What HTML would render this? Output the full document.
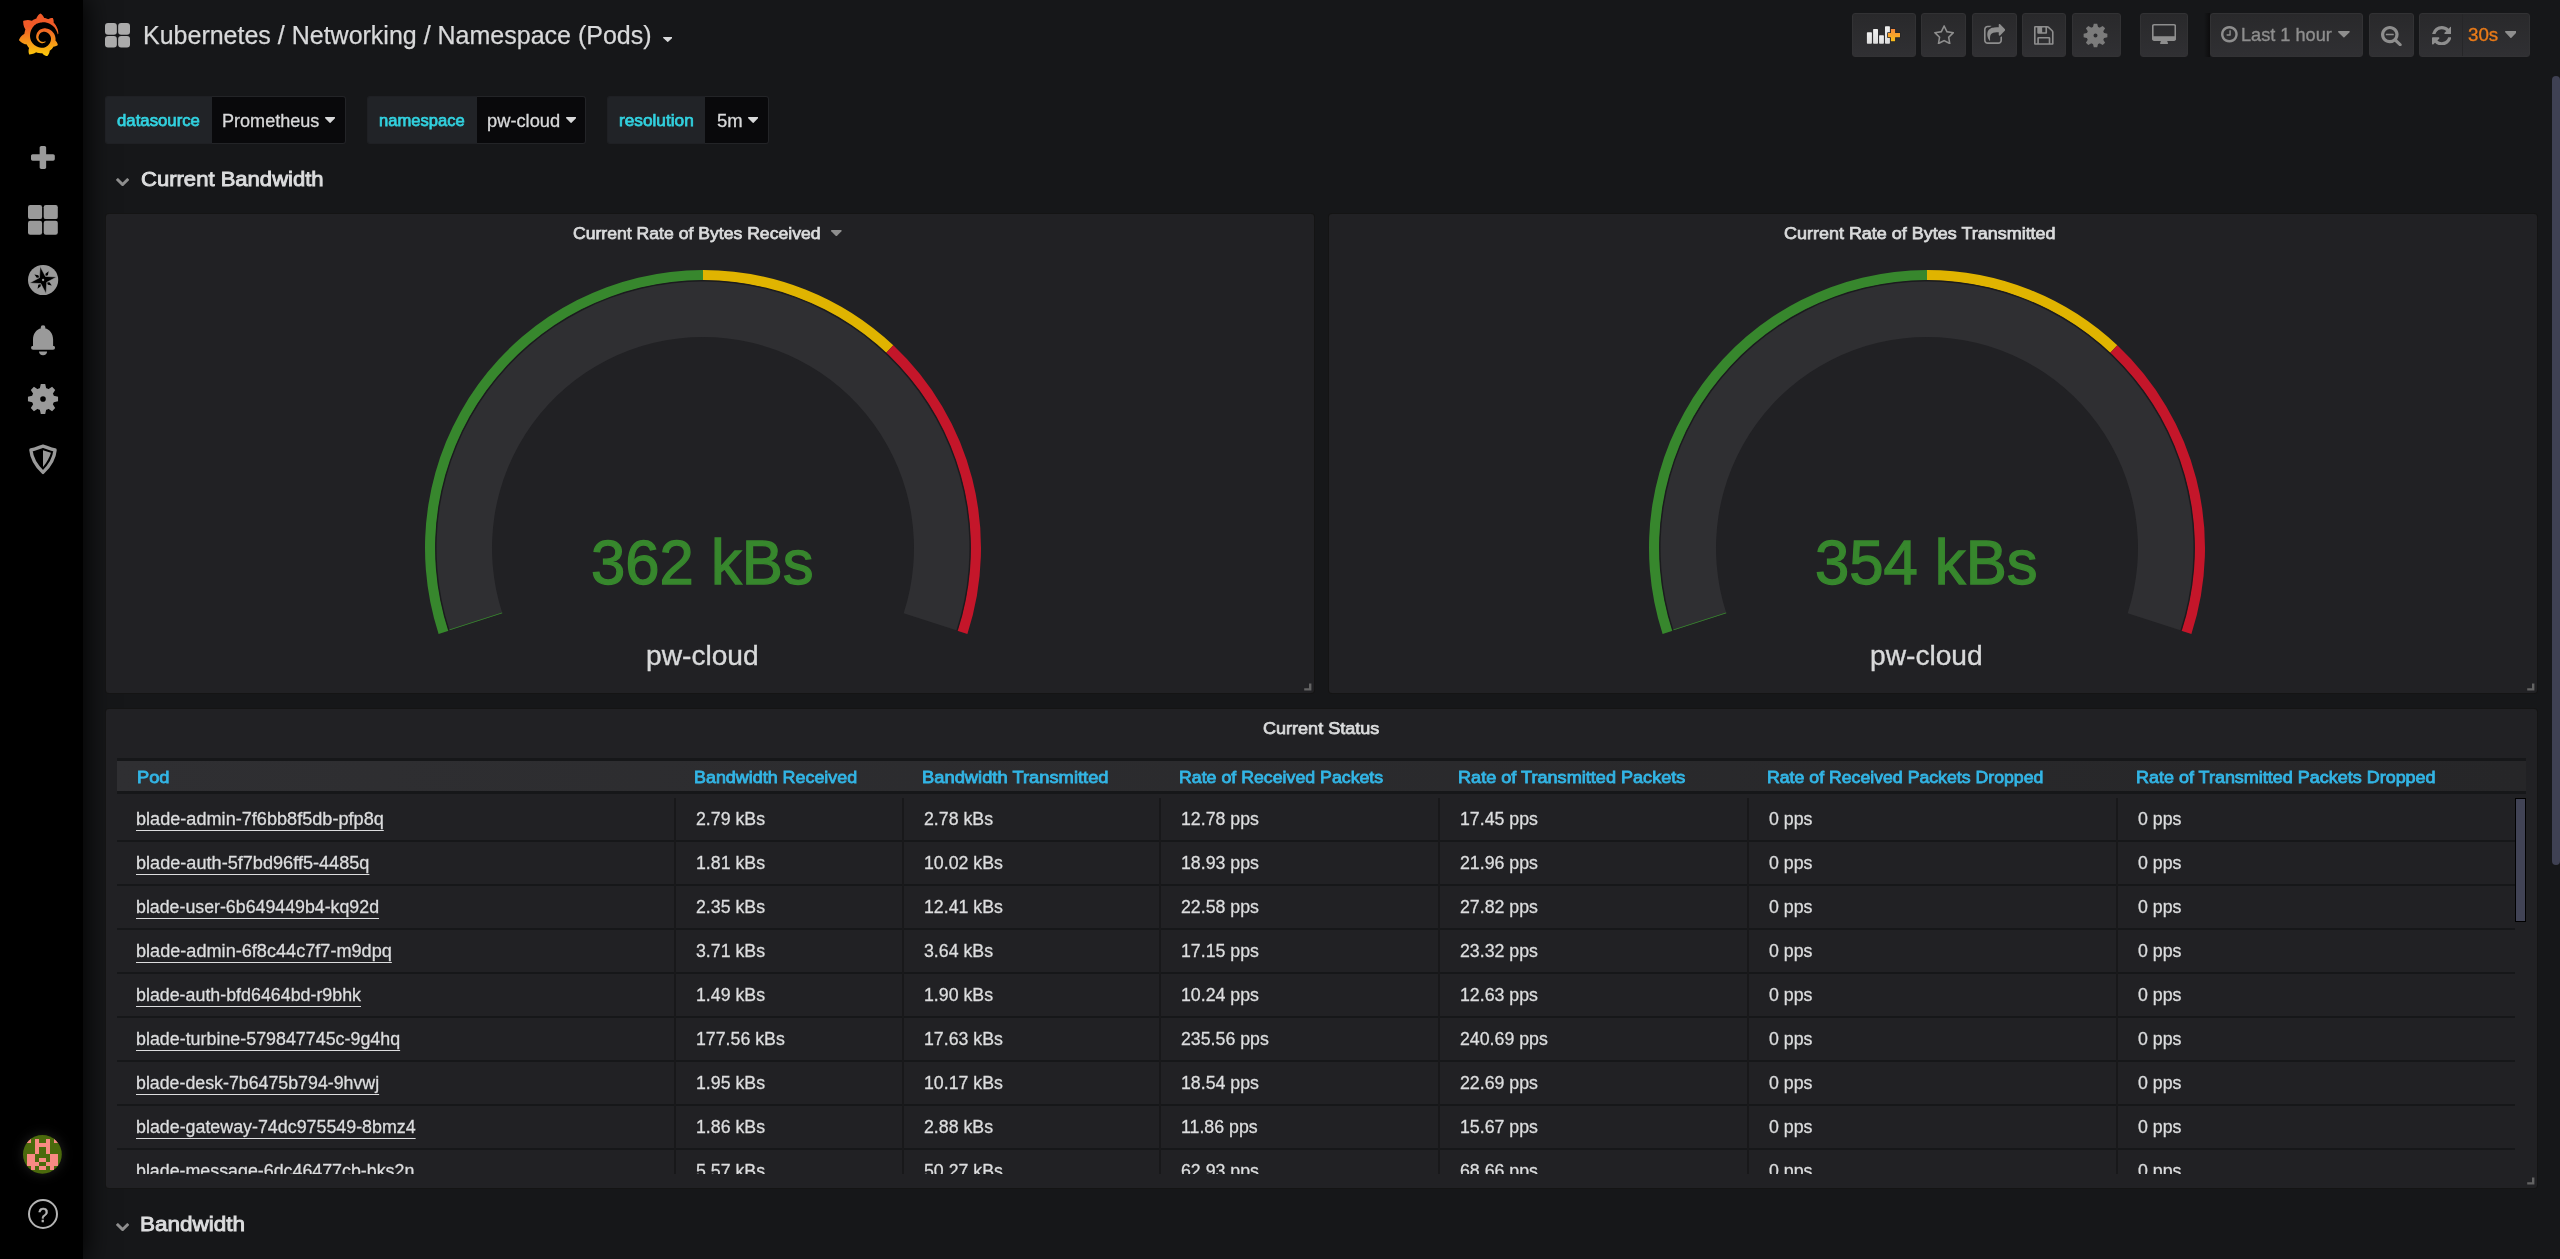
<!DOCTYPE html>
<html lang="en"><head><meta charset="utf-8"><title>Kubernetes / Networking / Namespace (Pods) - Grafana</title>
<style>
html,body{margin:0;padding:0}body{width:2560px;height:1259px;overflow:hidden;background:#161719;position:relative;font-family:"Liberation Sans", Arial, sans-serif}
.a{position:absolute;display:block}.t{position:absolute;white-space:nowrap;line-height:1.2;transform-origin:0 0}
</style></head>
<body>
<nav id="sidemenu" aria-label="Side menu">
<div class="a" id="side" style="left:0;top:0;width:83px;height:1259px;background:#000;box-shadow:0 0 26px 2px #000"></div>
<svg class="a" style="left:18px;top:12.9px" width="41.3" height="43.6" viewBox="0 0 351 365"><defs><linearGradient id="lg" gradientUnits="userSpaceOnUse" x1="175.5" y1="445.5" x2="175.5" y2="114"><stop offset="0" stop-color="#FFF100"/><stop offset="1" stop-color="#F05A28"/></linearGradient></defs><path fill="url(#lg)" d="M342,161.2c-0.6-6.1-1.6-13.1-3.6-20.9c-2-7.7-5-16.2-9.4-25c-4.4-8.8-10.1-17.9-17.500-26.800c-2.900-3.500-6.100-6.900-9.500-10.200c5.100-20.300-6.200-37.900-6.200-37.900c-19.500-1.200-31.900,6.100-36.500,9.400c-0.800-0.300-1.500-0.700-2.300-1c-3.300-1.300-6.700-2.600-10.300-3.700c-3.500-1.100-7.100-2.100-10.800-3c-3.700-0.900-7.400-1.600-11.200-2.200c-0.700-0.100-1.300-0.200-2-0.300c-8.500-27.200-32.900-38.600-32.900-38.600c-27.300,17.300-32.400,41.500-32.400,41.500s-0.100,0.500-0.300,1.400c-1.500,0.400-3,0.900-4.500,1.300c-2.100,0.600-4.200,1.400-6.200,2.200c-2.100,0.800-4.100,1.600-6.200,2.500c-4.100,1.800-8.200,3.800-12.200,6c-3.900,2.200-7.700,4.600-11.400,7.100c-0.500-0.200-1-0.400-1-0.400c-37.800-14.400-71.300,2.900-71.300,2.900c-3.100,40.200,15.100,65.500,18.700,70.100c-0.900,2.500-1.700,5-2.500,7.500c-2.800,9.100-4.900,18.400-6.200,28.100c-0.200,1.400-0.400,2.800-0.500,4.200C18.800,192.700,8.500,228,8.500,228c29.100,33.500,63.100,35.600,63.100,35.600c0,0,0.100-0.100,0.100-0.100c4.300,7.700,9.300,15,14.900,21.900c2.400,2.900,4.800,5.600,7.400,8.300c-10.600,30.400,1.500,55.600,1.500,55.600c32.400,1.200,53.700-14.200,58.200-17.700c3.200,1.100,6.500,2.100,9.800,2.900c10,2.600,20.200,4.100,30.400,4.500c2.500,0.100,5.100,0.200,7.600,0.100l1.200,0l0.800,0l1.600,0l1.600-0.100l0,0.100c15.300,21.800,42.100,24.900,42.100,24.900c19.100-20.100,20.200-40.100,20.200-44.400l0,0c0,0,0-0.100,0-0.300c0-0.400,0-0.600,0-0.600l0,0c0-0.300,0-0.600,0-0.900c4-2.800,7.800-5.800,11.400-9.100c7.600-6.900,14.300-14.800,19.900-23.300c0.500-0.800,1-1.600,1.500-2.400c21.600,1.200,36.900-13.400,36.900-13.400c-3.600-22.500-16.400-33.500-19.100-35.600l0,0c0,0-0.100-0.100-0.300-0.200c-0.200-0.100-0.200-0.200-0.200-0.200c0,0,0,0,0,0c-0.100-0.100-0.300-0.200-0.500-0.300c0.100-1.400,0.200-2.700,0.300-4.100c0.200-2.400,0.200-4.900,0.200-7.300l0-1.800l0-0.900l0-0.500c0-0.600,0-0.400,0-0.600l-0.100-1.500l-0.100-2c0-0.700-0.100-1.300-0.200-1.900c-0.100-0.600-0.100-1.300-0.200-1.900l-0.200-1.900l-0.300-1.900c-0.400-2.500-0.800-4.900-1.400-7.400c-2.300-9.700-6.100-18.900-11-27.200c-5-8.300-11.200-15.600-18.300-21.800c-7-6.200-14.900-11.200-23.100-14.900c-8.300-3.700-16.900-6.100-25.500-7.200c-4.300-0.600-8.600-0.800-12.900-0.700l-1.600,0l-0.400,0c-0.100,0-0.600,0-0.500,0l-0.700,0l-1.600,0.100c-0.600,0-1.200,0.100-1.700,0.100c-2.200,0.200-4.400,0.500-6.500,0.900c-8.600,1.600-16.700,4.700-23.800,9c-7.100,4.300-13.300,9.600-18.300,15.600c-5,6-8.900,12.700-11.600,19.600c-2.700,6.900-4.200,14.100-4.600,21c-0.100,1.700-0.100,3.500-0.100,5.200c0,0.400,0,0.900,0,1.300l0.100,1.400c0.100,0.800,0.100,1.700,0.200,2.500c0.300,3.500,1,6.900,1.900,10.100c1.900,6.500,4.900,12.400,8.600,17.400c3.700,5,8.200,9.100,12.900,12.400c4.700,3.200,9.800,5.500,14.800,7c5,1.500,10,2.100,14.700,2.100c0.600,0,1.200,0,1.700,0c0.300,0,0.600,0,0.900,0c0.300,0,0.600,0,0.900-0.100c0.500,0,1-0.100,1.500-0.100c0.100,0,0.300,0,0.400-0.100l0.500-0.100c0.300,0,0.600-0.100,0.900-0.100c0.600-0.100,1.100-0.200,1.700-0.300c0.600-0.100,1.100-0.200,1.600-0.400c1.100-0.200,2.100-0.600,3.100-0.900c2-0.700,4-1.500,5.700-2.400c1.800-0.900,3.400-2,5-3c0.400-0.300,0.900-0.600,1.300-1c1.600-1.300,1.900-3.700,0.600-5.300c-1.100-1.400-3.100-1.800-4.700-0.900c-0.400,0.200-0.800,0.400-1.200,0.600c-1.400,0.700-2.800,1.300-4.300,1.800c-1.500,0.500-3.100,0.900-4.700,1.200c-0.800,0.100-1.600,0.200-2.500,0.300c-0.400,0-0.800,0.100-1.300,0.100c-0.400,0-0.900,0-1.200,0c-0.400,0-0.800,0-1.200,0c-0.500,0-1,0-1.500-0.100c0,0-0.300,0-0.100,0l-0.200,0l-0.300,0c-0.200,0-0.500,0-0.700-0.100c-0.500-0.100-0.900-0.100-1.400-0.200c-3.700-0.500-7.400-1.600-10.900-3.200c-3.600-1.600-7-3.800-10.100-6.600c-3.100-2.800-5.800-6.100-7.900-9.900c-2.100-3.800-3.600-8-4.300-12.400c-0.300-2.200-0.500-4.500-0.400-6.700c0-0.600,0.100-1.200,0.100-1.800c0,0.200,0-0.100,0-0.100l0-0.200l0-0.500c0-0.300,0.100-0.600,0.100-0.900c0.100-1.200,0.300-2.400,0.500-3.600c1.700-9.600,6.500-19,13.900-26.100c1.900-1.800,3.900-3.400,6-4.900c2.100-1.500,4.400-2.800,6.800-3.900c2.400-1.100,4.800-2,7.400-2.700c2.500-0.700,5.100-1.100,7.800-1.400c1.300-0.100,2.600-0.200,4-0.200c0.400,0,0.600,0,0.900,0l1.100,0l0.700,0c0.300,0,0,0,0.100,0l0.300,0l1.100,0.100c2.900,0.200,5.700,0.600,8.500,1.300c5.600,1.200,11.100,3.300,16.200,6.100c10.200,5.700,18.900,14.500,24.200,25.100c2.700,5.300,4.600,11,5.500,16.900c0.200,1.500,0.400,3,0.500,4.500l0.100,1.100l0.100,1.100c0,0.400,0,0.800,0,1.100c0,0.400,0,0.800,0,1.100l0,1l0,1.100c0,0.700-0.100,1.900-0.100,2.600c-0.100,1.600-0.300,3.300-0.500,4.900c-0.200,1.600-0.500,3.200-0.800,4.800c-0.300,1.600-0.700,3.200-1.100,4.700c-0.800,3.100-1.800,6.200-3,9.300c-2.400,6-5.600,11.800-9.400,17.100c-7.700,10.600-18.200,19.200-30.200,24.700c-6,2.700-12.300,4.700-18.800,5.700c-3.200,0.600-6.500,0.900-9.800,1l-0.600,0l-0.500,0l-1.100,0l-1.600,0l-0.800,0c0.400,0-0.100,0-0.100,0l-0.300,0c-1.800,0-3.500-0.100-5.300-0.300c-7-0.500-13.900-1.800-20.700-3.700c-6.700-1.900-13.200-4.600-19.400-7.800c-12.300-6.600-23.400-15.600-32-26.500c-4.300-5.400-8.100-11.300-11.200-17.400c-3.100-6.100-5.600-12.600-7.400-19.100c-1.800-6.600-2.900-13.300-3.400-20.100l-0.100-1.300l0-0.300l0-0.300l0-0.600l0-1.100l0-0.300l0-0.400l0-0.800l0-1.600l0-0.300c0,0,0,0.100,0-0.100l0-0.600c0-0.800,0-1.700,0-2.500c0.100-3.300,0.400-6.800,0.800-10.200c0.400-3.400,1-6.900,1.700-10.300c0.700-3.400,1.500-6.800,2.500-10.200c1.900-6.700,4.300-13.200,7.100-19.300c5.700-12.200,13.100-23.100,22-31.800c2.200-2.200,4.500-4.200,6.900-6.200c2.400-1.900,4.900-3.700,7.500-5.400c2.500-1.700,5.200-3.200,7.900-4.600c1.300-0.700,2.700-1.400,4.100-2c0.700-0.300,1.400-0.600,2.100-0.900c0.700-0.300,1.400-0.600,2.100-0.900c2.800-1.200,5.700-2.200,8.700-3.100c0.700-0.200,1.500-0.400,2.200-0.700c0.700-0.200,1.500-0.400,2.200-0.600c1.500-0.400,3-0.800,4.500-1.100c0.700-0.200,1.500-0.300,2.300-0.500c0.800-0.200,1.500-0.300,2.300-0.500c0.800-0.100,1.500-0.300,2.300-0.400l1.100-0.200l1.200-0.200c0.800-0.100,1.500-0.200,2.300-0.300c0.900-0.100,1.700-0.200,2.600-0.300c0.700-0.100,1.900-0.200,2.600-0.300c0.500-0.100,1.100-0.100,1.600-0.200l1.100-0.100l0.500-0.100l0.600,0c0.900-0.100,1.700-0.100,2.600-0.200l1.300-0.100c0,0,0.500,0,0.100,0l0.300,0l0.600,0c0.700,0,1.500-0.100,2.200-0.100c2.900-0.100,5.900-0.100,8.800,0c5.800,0.200,11.500,0.900,17,1.900c11.100,2.100,21.500,5.600,31,10.300c9.500,4.600,17.900,10.300,25.300,16.500c0.500,0.400,0.900,0.800,1.400,1.200c0.400,0.400,0.900,0.800,1.300,1.200c0.900,0.800,1.700,1.600,2.600,2.400c0.900,0.800,1.700,1.600,2.500,2.400c0.800,0.800,1.600,1.600,2.400,2.500c3.100,3.300,6,6.600,8.600,10c5.200,6.700,9.400,13.500,12.700,19.900c0.200,0.400,0.400,0.800,0.600,1.200c0.200,0.400,0.400,0.800,0.600,1.200c0.400,0.800,0.800,1.600,1.100,2.400c0.400,0.800,0.700,1.500,1.100,2.300c0.300,0.800,0.700,1.500,1,2.300c1.200,3,2.400,5.900,3.300,8.600c1.500,4.400,2.600,8.300,3.500,11.700c0.300,1.400,1.600,2.300,3,2.100c1.500-0.100,2.600-1.300,2.600-2.800C342.600,170.400,342.500,166.100,342,161.200z"/></svg>
<svg class="a" style="left:31.00px;top:145.90px" width="23.80" height="23.00" viewBox="192 128 1408 1408" preserveAspectRatio="none"><path fill="#9a9a9a" d="M1600 736v192q0 40-28 68t-68 28h-416v416q0 40-28 68t-68 28h-192q-40 0-68-28t-28-68v-416h-416q-40 0-68-28t-28-68v-192q0-40 28-68t68-28h416v-416q0-40 28-68t68-28h192q40 0 68 28t28 68v416h416q40 0 68 28t28 68z"/></svg>
<svg class="a" style="left:28.1px;top:205px" width="29.799999999999997" height="29.80000000000001"><rect x="0.00" y="0.00" width="14.10" height="14.10" rx="2.2" fill="#9a9a9a"/><rect x="0.00" y="15.70" width="14.10" height="14.10" rx="2.2" fill="#9a9a9a"/><rect x="15.70" y="0.00" width="14.10" height="14.10" rx="2.2" fill="#9a9a9a"/><rect x="15.70" y="15.70" width="14.10" height="14.10" rx="2.2" fill="#9a9a9a"/></svg>
<svg class="a" style="left:27px;top:264px" width="32" height="32" viewBox="0 0 32 32"><circle cx="16.1" cy="16" r="15.1" fill="#9a9a9a"/><polygon points="18.58,12.12 20.88,11.22 21.65,7.32 18.43,9.66" fill="#000"/><polygon points="19.98,18.48 20.88,20.78 24.78,21.55 22.44,18.33" fill="#000"/><polygon points="13.62,19.88 11.32,20.78 10.55,24.68 13.77,22.34" fill="#000"/><polygon points="12.22,13.52 11.32,11.22 7.42,10.45 9.76,13.67" fill="#000"/><polygon points="13.16,2.62 18.42,12.38 29.48,13.06 19.72,18.32 19.04,29.38 13.78,19.62 2.72,18.94 12.48,13.68" fill="#000" stroke="#9a9a9a" stroke-width="0.5"/><circle cx="16.1" cy="16" r="1.15" fill="#9a9a9a"/></svg>
<svg class="a" style="left:30px;top:323.6px" width="27" height="33" viewBox="0 0 27 33"><path fill="#9a9a9a" d="M3,22 V15.5 C3,9.800 6.200,5.300 11.200,4.200 L13.050,3.600 L14.900,4.200 C19.900,5.300 23.100,9.800 23.100,15.500 V22Z M3.100,21.700 h19.900 a2,2 0 0 1 0,4.100 h-19.900 a2,2 0 0 1 0,-4.100z M9,27.500 h8.100 c0,2.100 -1.700,3.800 -4.050,3.800 s-4.050,-1.700 -4.050,-3.800z"/><circle cx="13.050" cy="3.700" r="2.350" fill="#9a9a9a"/></svg>
<svg class="a" style="left:27px;top:382.9px" width="32" height="32" viewBox="0 0 32 32"><path fill="#9a9a9a" d="M12.62,6.15 L13.80,0.96 L18.20,0.96 L19.38,6.15Z M20.58,6.65 L25.08,3.81 L28.19,6.92 L25.35,11.42Z M25.85,12.62 L31.04,13.80 L31.04,18.20 L25.85,19.38Z M25.35,20.58 L28.19,25.08 L25.08,28.19 L20.58,25.35Z M19.38,25.85 L18.20,31.04 L13.80,31.04 L12.62,25.85Z M11.42,25.35 L6.92,28.19 L3.81,25.08 L6.65,20.58Z M6.15,19.38 L0.96,18.20 L0.96,13.80 L6.15,12.62Z M6.65,11.42 L3.81,6.92 L6.92,3.81 L11.42,6.65Z "/><path fill="#9a9a9a" fill-rule="evenodd" d="M4.80,16.0 a11.2,11.2 0 1,0 22.4,0 a11.2,11.2 0 1,0 -22.4,0Z M13.20,16.0 a2.8,2.8 0 1,0 5.6,0 a2.8,2.8 0 1,0 -5.6,0Z"/></svg>
<svg class="a" style="left:28px;top:442.7px" width="30" height="33" viewBox="0 0 30 33"><path fill="none" stroke="#9a9a9a" stroke-width="3.3" stroke-linejoin="round" d="M2.900,7 C7.500,6.300 12.300,3.800 15,3.100 C17.700,3.800 22.500,6.300 27.100,7 C26.500,14 23.200,21.500 15,29.400 C6.800,21.500 3.500,14 2.900,7Z"/><path fill="#9a9a9a" d="M15,7.200 L22.900,9.700 C21.800,14 19.200,18.800 15,24.100Z"/></svg>
<svg class="a" style="left:22.9px;top:1134.8px;filter:drop-shadow(0 0 6px rgba(60,60,60,.55))" width="38.8" height="38.8" viewBox="0 0 10 10"><defs><clipPath id="cp"><circle cx="5" cy="5" r="5"/></clipPath></defs><g clip-path="url(#cp)" shape-rendering="crispEdges"><rect width="10" height="10" fill="#4b6a0c"/><rect x="1" y="1" width="1.02" height="1.02" fill="#f98a83"/><rect x="3" y="1" width="1.02" height="1.02" fill="#f98a83"/><rect x="6" y="1" width="1.02" height="1.02" fill="#f98a83"/><rect x="8" y="1" width="1.02" height="1.02" fill="#f98a83"/><rect x="3" y="2" width="1.02" height="1.02" fill="#f98a83"/><rect x="4" y="2" width="1.02" height="1.02" fill="#f98a83"/><rect x="5" y="2" width="1.02" height="1.02" fill="#f98a83"/><rect x="6" y="2" width="1.02" height="1.02" fill="#f98a83"/><rect x="3" y="3" width="1.02" height="1.02" fill="#f98a83"/><rect x="6" y="3" width="1.02" height="1.02" fill="#f98a83"/><rect x="3" y="4" width="1.02" height="1.02" fill="#f98a83"/><rect x="6" y="4" width="1.02" height="1.02" fill="#f98a83"/><rect x="1" y="5" width="1.02" height="1.02" fill="#f98a83"/><rect x="2" y="5" width="1.02" height="1.02" fill="#f98a83"/><rect x="7" y="5" width="1.02" height="1.02" fill="#f98a83"/><rect x="8" y="5" width="1.02" height="1.02" fill="#f98a83"/><rect x="1" y="6" width="1.02" height="1.02" fill="#f98a83"/><rect x="2" y="6" width="1.02" height="1.02" fill="#f98a83"/><rect x="4" y="6" width="1.02" height="1.02" fill="#f98a83"/><rect x="5" y="6" width="1.02" height="1.02" fill="#f98a83"/><rect x="7" y="6" width="1.02" height="1.02" fill="#f98a83"/><rect x="8" y="6" width="1.02" height="1.02" fill="#f98a83"/><rect x="1" y="7" width="1.02" height="1.02" fill="#f98a83"/><rect x="2" y="7" width="1.02" height="1.02" fill="#f98a83"/><rect x="3" y="7" width="1.02" height="1.02" fill="#f98a83"/><rect x="6" y="7" width="1.02" height="1.02" fill="#f98a83"/><rect x="7" y="7" width="1.02" height="1.02" fill="#f98a83"/><rect x="8" y="7" width="1.02" height="1.02" fill="#f98a83"/><rect x="2" y="8" width="1.02" height="1.02" fill="#f98a83"/><rect x="4" y="8" width="1.02" height="1.02" fill="#f98a83"/><rect x="5" y="8" width="1.02" height="1.02" fill="#f98a83"/><rect x="7" y="8" width="1.02" height="1.02" fill="#f98a83"/></g></svg>
<svg class="a" style="left:27px;top:1198px" width="32" height="32" viewBox="0 0 32 32"><circle cx="16" cy="16" r="14" fill="none" stroke="#b4b4b4" stroke-width="2"/></svg>
<span class="t" id="t0" style="font-size:21px;-webkit-text-stroke:0.5px currentColor;left:38.48px;top:1202.30px;color:#b4b4b4;transform:scaleX(0.8742);">?</span>
</nav>
<header id="navbar">
<svg class="a" style="left:105px;top:23px" width="25" height="24.6"><rect x="0.00" y="0.00" width="11.85" height="11.65" rx="3" fill="#ababab"/><rect x="0.00" y="12.95" width="11.85" height="11.65" rx="3" fill="#ababab"/><rect x="13.15" y="0.00" width="11.85" height="11.65" rx="3" fill="#ababab"/><rect x="13.15" y="12.95" width="11.85" height="11.65" rx="3" fill="#ababab"/></svg>
<span class="t" id="t1" style="font-size:25.5px;-webkit-text-stroke:0.25px currentColor;left:142.94px;top:19.90px;color:#d8d9da;transform:scaleX(0.9803);">Kubernetes / Networking / Namespace (Pods)</span>
<svg class="a" style="left:662.75px;top:37.10px" width="9.50" height="5.00" viewBox="384 640 1024 576" preserveAspectRatio="none"><path fill="#d8d9da" d="M1408 704q0 26-19 45l-448 448q-19 19-45 19t-45-19l-448-448q-19-19-19-45t19-45 45-19h896q26 0 45 19t19 45z"/></svg>
<div class="a" style="left:1852px;top:13px;width:64px;height:44px;background:linear-gradient(180deg,#29292b,#303033);border:1px solid #323234;border-radius:3px;box-sizing:border-box"></div>
<div class="a" style="left:1921px;top:13px;width:45px;height:44px;background:linear-gradient(180deg,#29292b,#303033);border:1px solid #323234;border-radius:3px;box-sizing:border-box"></div>
<div class="a" style="left:1972px;top:13px;width:45px;height:44px;background:linear-gradient(180deg,#29292b,#303033);border:1px solid #323234;border-radius:3px;box-sizing:border-box"></div>
<div class="a" style="left:2022px;top:13px;width:44px;height:44px;background:linear-gradient(180deg,#29292b,#303033);border:1px solid #323234;border-radius:3px;box-sizing:border-box"></div>
<div class="a" style="left:2072px;top:13px;width:49px;height:44px;background:linear-gradient(180deg,#29292b,#303033);border:1px solid #323234;border-radius:3px;box-sizing:border-box"></div>
<div class="a" style="left:2140px;top:13px;width:48px;height:44px;background:linear-gradient(180deg,#29292b,#303033);border:1px solid #323234;border-radius:3px;box-sizing:border-box"></div>
<div class="a" style="left:2210px;top:13px;width:153px;height:44px;background:linear-gradient(180deg,#29292b,#303033);border:1px solid #323234;border-radius:3px;box-sizing:border-box"></div>
<div class="a" style="left:2369px;top:13px;width:45px;height:44px;background:linear-gradient(180deg,#29292b,#303033);border:1px solid #323234;border-radius:3px;box-sizing:border-box"></div>
<div class="a" style="left:2419px;top:13px;width:111px;height:44px;background:linear-gradient(180deg,#29292b,#303033);border:1px solid #323234;border-radius:3px;box-sizing:border-box"></div>
<div class="a" style="left:2204px;top:13px;width:6px;height:44px;background:linear-gradient(90deg,#161719,#0c0c0d)"></div>
<div class="a" style="left:2462px;top:14px;width:1px;height:42px;background:#262628"></div>
<svg class="a" style="left:1866px;top:24px" width="36" height="22" viewBox="0 0 36 22"><defs><linearGradient id="og" x1="0" y1="0" x2="0" y2="1"><stop offset="0" stop-color="#f6893c"/><stop offset="1" stop-color="#fcc01a"/></linearGradient><linearGradient id="wg" x1="0" y1="0" x2="0" y2="1"><stop offset="0" stop-color="#f0f0f0"/><stop offset="1" stop-color="#dcdcdc"/></linearGradient></defs>
<rect x="0.9" y="8.2" width="5" height="11.6" rx=".7" fill="url(#wg)"/><rect x="7.1" y="5" width="4.9" height="14.800" rx=".7" fill="url(#wg)"/><rect x="13.1" y="11.2" width="4.8" height="8.600" rx=".7" fill="url(#wg)"/><rect x="19" y="2.200" width="4.900" height="17.600" rx=".7" fill="url(#wg)"/>
<path d="M24.900,5 h4.200 v4.100 h4.900 v4.200 h-4.900 v4.000 h-4.200 v-4.000 h-3.000 v-4.200 h3.000z" fill="url(#og)" stroke="#242426" stroke-width="1.5" paint-order="stroke" stroke-linejoin="round"/></svg>
<svg class="a" style="left:1933.75px;top:24.50px" width="20.25" height="19.50" viewBox="64 32 1664 1587" preserveAspectRatio="none"><path fill="#8e8e8e" d="M1201 1004l306-297-422-62-189-382-189 382-422 62 306 297-73 421 378-199 377 199zm527-357q0 22-26 48l-363 354 86 500q1 7 1 20 0 50-41 50-19 0-40-12l-449-236-449 236q-22 12-40 12-21 0-31.500-14.500t-10.500-35.500q0-6 2-20l86-500-364-354q-25-27-25-48 0-37 56-46l502-73 225-455q19-41 49-41t49 41l225 455 502 73q56 9 56 46z"/></svg>
<svg class="a" style="left:1984.00px;top:23.75px" width="21.30" height="20.00" viewBox="64 0 1664 1536" preserveAspectRatio="none"><path fill="#8e8e8e" d="M1472 989v259q0 119-84.500 203.500t-203.500 84.500h-832q-119 0-203.500-84.500t-84.500-203.500v-832q0-119 84.500-203.500t203.500-84.500h255q13 0 22.500 9.500t9.500 22.500q0 27-26 32-77 26-133 60-10 4-16 4h-112q-66 0-113 47t-47 113v832q0 66 47 113t113 47h832q66 0 113-47t47-113v-214q0-19 18-29 28-13 54-37 16-16 35-8 21 9 21 29zm237-496l-384 384q-18 19-45 19-12 0-25-5-39-17-39-59v-192h-160q-323 0-438 131-119 137-74 473 3 23-20 34-8 2-12 2-16 0-26-13-10-14-21-31t-39.500-68.500-49.500-99.500-38.500-114-17.500-122q0-49 3.500-91t14-90 28-88 47-81.500 68.500-74 94.500-61.500 124.500-48.500 159.500-30.500 196.500-11h160v-192q0-42 39-59 13-5 25-5 26 0 45 19l384 384q19 19 19 45t-19 45z"/></svg>
<svg class="a" style="left:2034.40px;top:26.00px" width="19.60" height="18.75" viewBox="128 128 1536 1536" preserveAspectRatio="none"><path fill="#8e8e8e" d="M512 1536h768v-384h-768v384zm896 0h128v-896q0-14-10-38.500t-20-34.500l-281-281q-10-10-34-20t-39-10v416q0 40-28 68t-68 28h-576q-40 0-68-28t-28-68v-416h-128v1280h128v-416q0-40 28-68t68-28h832q40 0 68 28t28 68v416zm-384-928v-320q0-13-9.500-22.500t-22.500-9.500h-192q-13 0-22.500 9.500t-9.500 22.500v320q0 13 9.500 22.500t22.500 9.500h192q13 0 22.500-9.500t9.500-22.500zm640 32v928q0 40-28 68t-68 28h-1344q-40 0-68-28t-28-68v-1344q0-40 28-68t68-28h928q40 0 88 20t76 48l280 280q28 28 48 76t20 88z"/></svg>
<svg class="a" style="left:2083.0px;top:22.5px" width="25" height="25" viewBox="0 0 25 25"><path fill="#7b7b7b" d="M9.82,4.67 L10.77,0.63 L14.23,0.63 L15.18,4.67Z M16.14,5.07 L19.67,2.88 L22.12,5.33 L19.93,8.86Z M20.33,9.82 L24.37,10.77 L24.37,14.23 L20.33,15.18Z M19.93,16.14 L22.12,19.67 L19.67,22.12 L16.14,19.93Z M15.18,20.33 L14.23,24.37 L10.77,24.37 L9.82,20.33Z M8.86,19.93 L5.33,22.12 L2.88,19.67 L5.07,16.14Z M4.67,15.18 L0.63,14.23 L0.63,10.77 L4.67,9.82Z M5.07,8.86 L2.88,5.33 L5.33,2.88 L8.86,5.07Z "/><path fill="#7b7b7b" fill-rule="evenodd" d="M3.60,12.5 a8.9,8.9 0 1,0 17.8,0 a8.9,8.9 0 1,0 -17.8,0Z M10.50,12.5 a2.0,2.0 0 1,0 4.0,0 a2.0,2.0 0 1,0 -4.0,0Z"/></svg>
<svg class="a" style="left:2151.90px;top:24.40px" width="24.10" height="20.00" viewBox="-64 0 1920 1664" preserveAspectRatio="none"><path fill="#8e8e8e" d="M1728 992v-832q0-13-9.500-22.500t-22.500-9.500h-1600q-13 0-22.500 9.500t-9.500 22.500v832q0 13 9.500 22.500t22.500 9.500h1600q13 0 22.500-9.500t9.500-22.500zm128-832v1088q0 66-47 113t-113 47h-544q0 37 16 77.500t32 71 16 43.500q0 26-19 45t-45 19h-512q-26 0-45-19t-19-45q0-14 16-44t32-70 16-78h-544q-66 0-113-47t-47-113v-1088q0-66 47-113t113-47h1600q66 0 113 47t47 113z"/></svg>
<svg class="a" style="left:2221.00px;top:26.00px" width="16.75" height="16.50" viewBox="128 128 1536 1536" preserveAspectRatio="none"><path fill="#8e8e8e" d="M1024 544v448q0 14-9 23t-23 9h-320q-14 0-23-9t-9-23v-64q0-14 9-23t23-9h224v-352q0-14 9-23t23-9h64q14 0 23 9t9 23zm416 352q0-148-73-273t-198-198-273-73-273 73-198 198-73 273 73 273 198 198 273 73 273-73 198-198 73-273zm224 0q0 209-103 385.500t-279.500 279.500-385.500 103-385.500-103-279.500-279.500-103-385.500 103-385.500 279.500-279.500 385.500-103 385.500 103 279.500 279.500 103 385.500z"/></svg>
<span class="t" id="t2" style="font-size:17.8px;-webkit-text-stroke:0.35px currentColor;left:2241.22px;top:24.60px;color:#8e8e8e;transform:scaleX(1.0206);">Last 1 hour</span>
<svg class="a" style="left:2338.00px;top:31.20px" width="11.80" height="6.40" viewBox="384 640 1024 576" preserveAspectRatio="none"><path fill="#8e8e8e" d="M1408 704q0 26-19 45l-448 448q-19 19-45 19t-45-19l-448-448q-19-19-19-45t19-45 45-19h896q26 0 45 19t19 45z"/></svg>
<svg class="a" style="left:2381.20px;top:26.00px" width="20.80" height="20.30" viewBox="64 128 1664 1664" preserveAspectRatio="none"><path fill="#8e8e8e" d="M1088 800v64q0 13-9.500 22.500t-22.500 9.500h-576q-13 0-22.500-9.500t-9.500-22.500v-64q0-13 9.500-22.500t22.500-9.500h576q13 0 22.500 9.500t9.500 22.500zm128 32q0-185-131.500-316.500t-316.500-131.500-316.500 131.500-131.500 316.500 131.500 316.500 316.500 131.500 316.500-131.500 131.500-316.500zm512 832q0 53-37.500 90.500t-90.500 37.500q-54 0-90-38l-343-342q-179 124-399 124-143 0-273.500-55.500t-225-150-150-225-55.500-273.500 55.500-273.500 150-225 225-150 273.500-55.500 273.500 55.500 225 150 150 225 55.500 273.500q0 220-124 399l343 343q37 37 37 90z"/></svg>
<svg class="a" style="left:2431.50px;top:25.60px" width="19.70" height="19.40" viewBox="128 128 1536 1536" preserveAspectRatio="none"><path fill="#8e8e8e" d="M1639 1056q0 5-1 7-64 268-268 434.500t-478 166.500q-146 0-282.500-55t-243.500-157l-129 129q-19 19-45 19t-45-19-19-45v-448q0-26 19-45t45-19h448q26 0 45 19t19 45-19 45l-137 137q71 66 161 102t187 36q134 0 250-65t186-179q11-17 53-117 8-23 30-23h192q13 0 22.500 9.500t9.500 22.500zm25-800v448q0 26-19 45t-45 19h-448q-26 0-45-19t-19-45 19-45l138-138q-148-137-349-137-134 0-250 65t-186 179q-11 17-53 117-8 23-30 23h-199q-13 0-22.500-9.500t-9.500-22.500v-7q65-268 270-434.500t480-166.500q146 0 284 55.500t245 156.500l130-129q19-19 45-19t45 19 19 45z"/></svg>
<span class="t" id="t3" style="font-size:17.8px;-webkit-text-stroke:0.35px currentColor;left:2468.38px;top:25.00px;color:#eb7b18;transform:scaleX(1.0543);">30s</span>
<svg class="a" style="left:2504.50px;top:31.20px" width="11.80" height="7.10" viewBox="384 640 1024 576" preserveAspectRatio="none"><path fill="#8e8e8e" d="M1408 704q0 26-19 45l-448 448q-19 19-45 19t-45-19l-448-448q-19-19-19-45t19-45 45-19h896q26 0 45 19t19 45z"/></svg>
</header>
<section id="submenu" aria-label="Template variables">
<div class="a" style="left:105px;top:96px;width:107px;height:48px;background:#212327;border:1px solid #1f2024;border-right:0;border-radius:3px 0 0 3px;box-sizing:border-box"></div>
<div class="a" style="left:212px;top:96px;width:133.60000000000002px;height:48px;background:#09090b;border:1px solid #232427;border-left:0;border-radius:0 3px 3px 0;box-sizing:border-box"></div>
<span class="t" id="t4" style="font-size:17.0px;-webkit-text-stroke:0.75px currentColor;left:117.49px;top:111.00px;color:#32d1df;transform:scaleX(0.9861);">datasource</span>
<span class="t" id="t5" style="font-size:17.8px;-webkit-text-stroke:0.3px currentColor;left:222.46px;top:110.70px;color:#d8d9da;transform:scaleX(1.0156);">Prometheus</span>
<svg class="a" style="left:325.00px;top:117.20px" width="10.20" height="6.00" viewBox="384 640 1024 576" preserveAspectRatio="none"><path fill="#d8d9da" d="M1408 704q0 26-19 45l-448 448q-19 19-45 19t-45-19l-448-448q-19-19-19-45t19-45 45-19h896q26 0 45 19t19 45z"/></svg>
<div class="a" style="left:367px;top:96px;width:110px;height:48px;background:#212327;border:1px solid #1f2024;border-right:0;border-radius:3px 0 0 3px;box-sizing:border-box"></div>
<div class="a" style="left:477px;top:96px;width:108.60000000000002px;height:48px;background:#09090b;border:1px solid #232427;border-left:0;border-radius:0 3px 3px 0;box-sizing:border-box"></div>
<span class="t" id="t6" style="font-size:17.0px;-webkit-text-stroke:0.75px currentColor;left:379.15px;top:111.00px;color:#32d1df;transform:scaleX(0.9752);">namespace</span>
<span class="t" id="t7" style="font-size:17.8px;-webkit-text-stroke:0.3px currentColor;left:487.11px;top:110.70px;color:#d8d9da;transform:scaleX(1.0287);">pw-cloud</span>
<svg class="a" style="left:566.20px;top:117.20px" width="10.20" height="6.00" viewBox="384 640 1024 576" preserveAspectRatio="none"><path fill="#d8d9da" d="M1408 704q0 26-19 45l-448 448q-19 19-45 19t-45-19l-448-448q-19-19-19-45t19-45 45-19h896q26 0 45 19t19 45z"/></svg>
<div class="a" style="left:607.2px;top:96px;width:97.79999999999995px;height:48px;background:#212327;border:1px solid #1f2024;border-right:0;border-radius:3px 0 0 3px;box-sizing:border-box"></div>
<div class="a" style="left:705px;top:96px;width:63.60000000000002px;height:48px;background:#09090b;border:1px solid #232427;border-left:0;border-radius:0 3px 3px 0;box-sizing:border-box"></div>
<span class="t" id="t8" style="font-size:17.0px;-webkit-text-stroke:0.75px currentColor;left:619.37px;top:111.00px;color:#32d1df;transform:scaleX(1.0138);">resolution</span>
<span class="t" id="t9" style="font-size:17.8px;-webkit-text-stroke:0.3px currentColor;left:717.11px;top:110.70px;color:#d8d9da;transform:scaleX(1.0395);">5m</span>
<svg class="a" style="left:748.10px;top:117.20px" width="10.40" height="6.00" viewBox="384 640 1024 576" preserveAspectRatio="none"><path fill="#d8d9da" d="M1408 704q0 26-19 45l-448 448q-19 19-45 19t-45-19l-448-448q-19-19-19-45t19-45 45-19h896q26 0 45 19t19 45z"/></svg>
</section>
<main id="dashboard">
<svg class="a" style="left:116.20px;top:177.60px" width="13.20" height="8.40" viewBox="90 533 1612 1035" preserveAspectRatio="none"><path fill="#8e8e8e" d="M1683 808l-742 741q-19 19-45 19t-45-19l-742-741q-19-19-19-45.500t19-45.500l166-165q19-19 45-19t45 19l531 531 531-531q19-19 45-19t45 19l166 165q19 19 19 45.500t-19 45.500z"/></svg>
<span class="t" id="t10" style="font-size:20.9px;-webkit-text-stroke:0.9px currentColor;left:140.62px;top:166.00px;color:#dcddde;transform:scaleX(1.0554);">Current Bandwidth</span>
<svg class="a" style="left:116.20px;top:1222.60px" width="13.20" height="8.40" viewBox="90 533 1612 1035" preserveAspectRatio="none"><path fill="#8e8e8e" d="M1683 808l-742 741q-19 19-45 19t-45-19l-742-741q-19-19-19-45.500t19-45.500l166-165q19-19 45-19t45 19l531 531 531-531q19-19 45-19t45 19l166 165q19 19 19 45.500t-19 45.500z"/></svg>
<span class="t" id="t11" style="font-size:20.9px;-webkit-text-stroke:0.9px currentColor;left:140.28px;top:1211.00px;color:#dcddde;transform:scaleX(1.0772);">Bandwidth</span>
<section class="panel" aria-label="Current Rate of Bytes Received">
<div class="a" style="left:105.5px;top:214px;width:1208.5px;height:479px;background:#212124;border-radius:3px;box-shadow:0 0 0 1px #141414"></div>
<svg class="a" style="left:1303.5px;top:682.5px" width="8" height="8" viewBox="0 0 8 8"><path d="M6.2,0.4 V6.4 H0.2" fill="none" stroke="#636363" stroke-width="2.4"/></svg>
<svg class="a" style="left:402.70000000000005px;top:257.79999999999995px" width="600" height="400" viewBox="0 0 600 400"><path d="M35.61,375.91 A278,278 0 0 1 300.00,12.00 L300.00,22.60 A267.40000000000003,267.40000000000003 0 0 0 45.69,372.63Z" fill="#37872d"/><path d="M300.00,12.00 A278,278 0 0 1 490.30,87.35 L483.05,95.07 A267.40000000000003,267.40000000000003 0 0 0 300.00,22.60Z" fill="#e0b400"/><path d="M490.30,87.35 A278,278 0 0 1 564.39,375.91 L554.31,372.63 A267.40000000000003,267.40000000000003 0 0 0 483.05,95.07Z" fill="#c4162a"/><path d="M45.21,372.79 A267.90000000000003,267.90000000000003 0 1 1 554.79,372.79 L553.55,372.38 A266.59999999999997,266.59999999999997 0 1 0 46.45,372.38Z" fill="#1b1b1e"/><path d="M46.64,372.32 A266.4,266.4 0 1 1 553.36,372.32 L500.67,355.20 A211,211 0 1 0 99.33,355.20Z" fill="#2f2f32"/><path d="M46.64,372.32 A266.4,266.4 0 0 1 46.35,371.43 L99.10,354.50 A211,211 0 0 0 99.33,355.20Z" fill="#37872d"/></svg>
<span class="t" id="t12" style="font-size:62.6px;-webkit-text-stroke:1.3px currentColor;left:591.36px;top:525.00px;color:#37872d;transform:scaleX(0.9843);">362 kBs</span>
<span class="t" id="t13" style="font-size:27.2px;-webkit-text-stroke:0.35px currentColor;left:646.15px;top:640.30px;color:#d8d9da;transform:scaleX(1.0358);">pw-cloud</span>
<span class="t" id="t14" style="font-size:16.8px;-webkit-text-stroke:0.75px currentColor;left:572.61px;top:223.90px;color:#dadbdc;transform:scaleX(1.0490);">Current Rate of Bytes Received</span>
<svg class="a" style="left:831.30px;top:230.00px" width="10.70" height="6.20" viewBox="384 640 1024 576" preserveAspectRatio="none"><path fill="#8e8e8e" d="M1408 704q0 26-19 45l-448 448q-19 19-45 19t-45-19l-448-448q-19-19-19-45t19-45 45-19h896q26 0 45 19t19 45z"/></svg>
</section>
<section class="panel" aria-label="Current Rate of Bytes Transmitted">
<div class="a" style="left:1329px;top:214px;width:1208px;height:479px;background:#212124;border-radius:3px;box-shadow:0 0 0 1px #141414"></div>
<svg class="a" style="left:2526.5px;top:682.5px" width="8" height="8" viewBox="0 0 8 8"><path d="M6.2,0.4 V6.4 H0.2" fill="none" stroke="#636363" stroke-width="2.4"/></svg>
<svg class="a" style="left:1626.7px;top:257.79999999999995px" width="600" height="400" viewBox="0 0 600 400"><path d="M35.61,375.91 A278,278 0 0 1 300.00,12.00 L300.00,22.60 A267.40000000000003,267.40000000000003 0 0 0 45.69,372.63Z" fill="#37872d"/><path d="M300.00,12.00 A278,278 0 0 1 490.30,87.35 L483.05,95.07 A267.40000000000003,267.40000000000003 0 0 0 300.00,22.60Z" fill="#e0b400"/><path d="M490.30,87.35 A278,278 0 0 1 564.39,375.91 L554.31,372.63 A267.40000000000003,267.40000000000003 0 0 0 483.05,95.07Z" fill="#c4162a"/><path d="M45.21,372.79 A267.90000000000003,267.90000000000003 0 1 1 554.79,372.79 L553.55,372.38 A266.59999999999997,266.59999999999997 0 1 0 46.45,372.38Z" fill="#1b1b1e"/><path d="M46.64,372.32 A266.4,266.4 0 1 1 553.36,372.32 L500.67,355.20 A211,211 0 1 0 99.33,355.20Z" fill="#2f2f32"/><path d="M46.64,372.32 A266.4,266.4 0 0 1 46.35,371.43 L99.10,354.50 A211,211 0 0 0 99.33,355.20Z" fill="#37872d"/></svg>
<span class="t" id="t15" style="font-size:62.6px;-webkit-text-stroke:1.3px currentColor;left:1815.26px;top:525.00px;color:#37872d;transform:scaleX(0.9839);">354 kBs</span>
<span class="t" id="t16" style="font-size:27.2px;-webkit-text-stroke:0.35px currentColor;left:1870.05px;top:640.30px;color:#d8d9da;transform:scaleX(1.0358);">pw-cloud</span>
<span class="t" id="t17" style="font-size:16.8px;-webkit-text-stroke:0.75px currentColor;left:1784.35px;top:223.90px;color:#dadbdc;transform:scaleX(1.0706);">Current Rate of Bytes Transmitted</span>
</section>
<section class="panel" aria-label="Current Status">
<div class="a" style="left:105.5px;top:709px;width:2431.5px;height:478.5px;background:#212124;border-radius:3px;box-shadow:0 0 0 1px #141414"></div>
<svg class="a" style="left:2526.5px;top:1177.0px" width="8" height="8" viewBox="0 0 8 8"><path d="M6.2,0.4 V6.4 H0.2" fill="none" stroke="#636363" stroke-width="2.4"/></svg>
<span class="t" id="t18" style="font-size:16.8px;-webkit-text-stroke:0.75px currentColor;left:1262.95px;top:718.80px;color:#dadbdc;transform:scaleX(1.0748);">Current Status</span>
<div class="a" style="left:117px;top:758px;width:2409px;height:36px;background:#161719"></div>
<div class="a" style="left:117px;top:761px;width:2409px;height:30px;background:linear-gradient(90deg,#2f2f32,#262628)"></div>
<span class="t" id="t19" style="font-size:16.7px;-webkit-text-stroke:0.8px currentColor;left:136.72px;top:767.80px;color:#33b5e5;transform:scaleX(1.0944);">Pod</span>
<span class="t" id="t20" style="font-size:16.7px;-webkit-text-stroke:0.8px currentColor;left:694.00px;top:767.80px;color:#33b5e5;transform:scaleX(1.0726);">Bandwidth Received</span>
<span class="t" id="t21" style="font-size:16.7px;-webkit-text-stroke:0.8px currentColor;left:921.72px;top:767.80px;color:#33b5e5;transform:scaleX(1.0991);">Bandwidth Transmitted</span>
<span class="t" id="t22" style="font-size:16.7px;-webkit-text-stroke:0.8px currentColor;left:1178.76px;top:767.80px;color:#33b5e5;transform:scaleX(1.0634);">Rate of Received Packets</span>
<span class="t" id="t23" style="font-size:16.7px;-webkit-text-stroke:0.8px currentColor;left:1457.98px;top:767.80px;color:#33b5e5;transform:scaleX(1.0847);">Rate of Transmitted Packets</span>
<span class="t" id="t24" style="font-size:16.7px;-webkit-text-stroke:0.8px currentColor;left:1766.76px;top:767.80px;color:#33b5e5;transform:scaleX(1.0602);">Rate of Received Packets Dropped</span>
<span class="t" id="t25" style="font-size:16.7px;-webkit-text-stroke:0.8px currentColor;left:2135.74px;top:767.80px;color:#33b5e5;transform:scaleX(1.0767);">Rate of Transmitted Packets Dropped</span>
<div class="a" id="tb" style="left:117px;top:794px;width:2412px;height:380px;overflow:hidden">
<div class="a" style="left:0;top:46.0px;width:2398px;height:2px;background:#161719"></div>
<span class="t" id="t26" style="font-size:17.5px;-webkit-text-stroke:0.3px currentColor;text-decoration:underline;text-decoration-thickness:1.1px;text-underline-offset:5.1px;text-decoration-skip-ink:none;left:19.06px;top:15.00px;color:#dcddde;transform:scaleX(1.0353);">blade-admin-7f6bb8f5db-pfp8q</span>
<span class="t" id="t27" style="font-size:17.5px;-webkit-text-stroke:0.3px currentColor;left:578.70px;top:15.00px;color:#dcddde;transform:scaleX(1.0140);">2.79 kBs</span>
<span class="t" id="t28" style="font-size:17.5px;-webkit-text-stroke:0.3px currentColor;left:806.90px;top:15.00px;color:#dcddde;transform:scaleX(1.0140);">2.78 kBs</span>
<span class="t" id="t29" style="font-size:17.5px;-webkit-text-stroke:0.3px currentColor;left:1063.90px;top:15.00px;color:#dcddde;transform:scaleX(1.0140);">12.78 pps</span>
<span class="t" id="t30" style="font-size:17.5px;-webkit-text-stroke:0.3px currentColor;left:1342.90px;top:15.00px;color:#dcddde;transform:scaleX(1.0140);">17.45 pps</span>
<span class="t" id="t31" style="font-size:17.5px;-webkit-text-stroke:0.3px currentColor;left:1651.80px;top:15.00px;color:#dcddde;transform:scaleX(1.0140);">0 pps</span>
<span class="t" id="t32" style="font-size:17.5px;-webkit-text-stroke:0.3px currentColor;left:2021.20px;top:15.00px;color:#dcddde;transform:scaleX(1.0140);">0 pps</span>
<div class="a" style="left:0;top:90.0px;width:2398px;height:2px;background:#161719"></div>
<span class="t" id="t33" style="font-size:17.5px;-webkit-text-stroke:0.3px currentColor;text-decoration:underline;text-decoration-thickness:1.1px;text-underline-offset:5.1px;text-decoration-skip-ink:none;left:19.05px;top:59.00px;color:#dcddde;transform:scaleX(1.0355);">blade-auth-5f7bd96ff5-4485q</span>
<span class="t" id="t34" style="font-size:17.5px;-webkit-text-stroke:0.3px currentColor;left:578.70px;top:59.00px;color:#dcddde;transform:scaleX(1.0140);">1.81 kBs</span>
<span class="t" id="t35" style="font-size:17.5px;-webkit-text-stroke:0.3px currentColor;left:806.90px;top:59.00px;color:#dcddde;transform:scaleX(1.0140);">10.02 kBs</span>
<span class="t" id="t36" style="font-size:17.5px;-webkit-text-stroke:0.3px currentColor;left:1063.90px;top:59.00px;color:#dcddde;transform:scaleX(1.0140);">18.93 pps</span>
<span class="t" id="t37" style="font-size:17.5px;-webkit-text-stroke:0.3px currentColor;left:1342.90px;top:59.00px;color:#dcddde;transform:scaleX(1.0140);">21.96 pps</span>
<span class="t" id="t38" style="font-size:17.5px;-webkit-text-stroke:0.3px currentColor;left:1651.80px;top:59.00px;color:#dcddde;transform:scaleX(1.0140);">0 pps</span>
<span class="t" id="t39" style="font-size:17.5px;-webkit-text-stroke:0.3px currentColor;left:2021.20px;top:59.00px;color:#dcddde;transform:scaleX(1.0140);">0 pps</span>
<div class="a" style="left:0;top:134.0px;width:2398px;height:2px;background:#161719"></div>
<span class="t" id="t40" style="font-size:17.5px;-webkit-text-stroke:0.3px currentColor;text-decoration:underline;text-decoration-thickness:1.1px;text-underline-offset:5.1px;text-decoration-skip-ink:none;left:19.08px;top:103.00px;color:#dcddde;transform:scaleX(1.0153);">blade-user-6b649449b4-kq92d</span>
<span class="t" id="t41" style="font-size:17.5px;-webkit-text-stroke:0.3px currentColor;left:578.70px;top:103.00px;color:#dcddde;transform:scaleX(1.0140);">2.35 kBs</span>
<span class="t" id="t42" style="font-size:17.5px;-webkit-text-stroke:0.3px currentColor;left:806.90px;top:103.00px;color:#dcddde;transform:scaleX(1.0140);">12.41 kBs</span>
<span class="t" id="t43" style="font-size:17.5px;-webkit-text-stroke:0.3px currentColor;left:1063.90px;top:103.00px;color:#dcddde;transform:scaleX(1.0140);">22.58 pps</span>
<span class="t" id="t44" style="font-size:17.5px;-webkit-text-stroke:0.3px currentColor;left:1342.90px;top:103.00px;color:#dcddde;transform:scaleX(1.0140);">27.82 pps</span>
<span class="t" id="t45" style="font-size:17.5px;-webkit-text-stroke:0.3px currentColor;left:1651.80px;top:103.00px;color:#dcddde;transform:scaleX(1.0140);">0 pps</span>
<span class="t" id="t46" style="font-size:17.5px;-webkit-text-stroke:0.3px currentColor;left:2021.20px;top:103.00px;color:#dcddde;transform:scaleX(1.0140);">0 pps</span>
<div class="a" style="left:0;top:178.0px;width:2398px;height:2px;background:#161719"></div>
<span class="t" id="t47" style="font-size:17.5px;-webkit-text-stroke:0.3px currentColor;text-decoration:underline;text-decoration-thickness:1.1px;text-underline-offset:5.1px;text-decoration-skip-ink:none;left:19.05px;top:147.00px;color:#dcddde;transform:scaleX(1.0354);">blade-admin-6f8c44c7f7-m9dpq</span>
<span class="t" id="t48" style="font-size:17.5px;-webkit-text-stroke:0.3px currentColor;left:578.70px;top:147.00px;color:#dcddde;transform:scaleX(1.0140);">3.71 kBs</span>
<span class="t" id="t49" style="font-size:17.5px;-webkit-text-stroke:0.3px currentColor;left:806.90px;top:147.00px;color:#dcddde;transform:scaleX(1.0140);">3.64 kBs</span>
<span class="t" id="t50" style="font-size:17.5px;-webkit-text-stroke:0.3px currentColor;left:1063.90px;top:147.00px;color:#dcddde;transform:scaleX(1.0140);">17.15 pps</span>
<span class="t" id="t51" style="font-size:17.5px;-webkit-text-stroke:0.3px currentColor;left:1342.90px;top:147.00px;color:#dcddde;transform:scaleX(1.0140);">23.32 pps</span>
<span class="t" id="t52" style="font-size:17.5px;-webkit-text-stroke:0.3px currentColor;left:1651.80px;top:147.00px;color:#dcddde;transform:scaleX(1.0140);">0 pps</span>
<span class="t" id="t53" style="font-size:17.5px;-webkit-text-stroke:0.3px currentColor;left:2021.20px;top:147.00px;color:#dcddde;transform:scaleX(1.0140);">0 pps</span>
<div class="a" style="left:0;top:222.0px;width:2398px;height:2px;background:#161719"></div>
<span class="t" id="t54" style="font-size:17.5px;-webkit-text-stroke:0.3px currentColor;text-decoration:underline;text-decoration-thickness:1.1px;text-underline-offset:5.1px;text-decoration-skip-ink:none;left:19.07px;top:191.00px;color:#dcddde;transform:scaleX(1.0187);">blade-auth-bfd6464bd-r9bhk</span>
<span class="t" id="t55" style="font-size:17.5px;-webkit-text-stroke:0.3px currentColor;left:578.70px;top:191.00px;color:#dcddde;transform:scaleX(1.0140);">1.49 kBs</span>
<span class="t" id="t56" style="font-size:17.5px;-webkit-text-stroke:0.3px currentColor;left:806.90px;top:191.00px;color:#dcddde;transform:scaleX(1.0140);">1.90 kBs</span>
<span class="t" id="t57" style="font-size:17.5px;-webkit-text-stroke:0.3px currentColor;left:1063.90px;top:191.00px;color:#dcddde;transform:scaleX(1.0140);">10.24 pps</span>
<span class="t" id="t58" style="font-size:17.5px;-webkit-text-stroke:0.3px currentColor;left:1342.90px;top:191.00px;color:#dcddde;transform:scaleX(1.0140);">12.63 pps</span>
<span class="t" id="t59" style="font-size:17.5px;-webkit-text-stroke:0.3px currentColor;left:1651.80px;top:191.00px;color:#dcddde;transform:scaleX(1.0140);">0 pps</span>
<span class="t" id="t60" style="font-size:17.5px;-webkit-text-stroke:0.3px currentColor;left:2021.20px;top:191.00px;color:#dcddde;transform:scaleX(1.0140);">0 pps</span>
<div class="a" style="left:0;top:266.0px;width:2398px;height:2px;background:#161719"></div>
<span class="t" id="t61" style="font-size:17.5px;-webkit-text-stroke:0.3px currentColor;text-decoration:underline;text-decoration-thickness:1.1px;text-underline-offset:5.1px;text-decoration-skip-ink:none;left:19.07px;top:235.00px;color:#dcddde;transform:scaleX(1.0205);">blade-turbine-579847745c-9g4hq</span>
<span class="t" id="t62" style="font-size:17.5px;-webkit-text-stroke:0.3px currentColor;left:578.70px;top:235.00px;color:#dcddde;transform:scaleX(1.0140);">177.56 kBs</span>
<span class="t" id="t63" style="font-size:17.5px;-webkit-text-stroke:0.3px currentColor;left:806.90px;top:235.00px;color:#dcddde;transform:scaleX(1.0140);">17.63 kBs</span>
<span class="t" id="t64" style="font-size:17.5px;-webkit-text-stroke:0.3px currentColor;left:1063.90px;top:235.00px;color:#dcddde;transform:scaleX(1.0140);">235.56 pps</span>
<span class="t" id="t65" style="font-size:17.5px;-webkit-text-stroke:0.3px currentColor;left:1342.90px;top:235.00px;color:#dcddde;transform:scaleX(1.0140);">240.69 pps</span>
<span class="t" id="t66" style="font-size:17.5px;-webkit-text-stroke:0.3px currentColor;left:1651.80px;top:235.00px;color:#dcddde;transform:scaleX(1.0140);">0 pps</span>
<span class="t" id="t67" style="font-size:17.5px;-webkit-text-stroke:0.3px currentColor;left:2021.20px;top:235.00px;color:#dcddde;transform:scaleX(1.0140);">0 pps</span>
<div class="a" style="left:0;top:310.0px;width:2398px;height:2px;background:#161719"></div>
<span class="t" id="t68" style="font-size:17.5px;-webkit-text-stroke:0.3px currentColor;text-decoration:underline;text-decoration-thickness:1.1px;text-underline-offset:5.1px;text-decoration-skip-ink:none;left:19.08px;top:279.00px;color:#dcddde;transform:scaleX(1.0159);">blade-desk-7b6475b794-9hvwj</span>
<span class="t" id="t69" style="font-size:17.5px;-webkit-text-stroke:0.3px currentColor;left:578.70px;top:279.00px;color:#dcddde;transform:scaleX(1.0140);">1.95 kBs</span>
<span class="t" id="t70" style="font-size:17.5px;-webkit-text-stroke:0.3px currentColor;left:806.90px;top:279.00px;color:#dcddde;transform:scaleX(1.0140);">10.17 kBs</span>
<span class="t" id="t71" style="font-size:17.5px;-webkit-text-stroke:0.3px currentColor;left:1063.90px;top:279.00px;color:#dcddde;transform:scaleX(1.0140);">18.54 pps</span>
<span class="t" id="t72" style="font-size:17.5px;-webkit-text-stroke:0.3px currentColor;left:1342.90px;top:279.00px;color:#dcddde;transform:scaleX(1.0140);">22.69 pps</span>
<span class="t" id="t73" style="font-size:17.5px;-webkit-text-stroke:0.3px currentColor;left:1651.80px;top:279.00px;color:#dcddde;transform:scaleX(1.0140);">0 pps</span>
<span class="t" id="t74" style="font-size:17.5px;-webkit-text-stroke:0.3px currentColor;left:2021.20px;top:279.00px;color:#dcddde;transform:scaleX(1.0140);">0 pps</span>
<div class="a" style="left:0;top:354.0px;width:2398px;height:2px;background:#161719"></div>
<span class="t" id="t75" style="font-size:17.5px;-webkit-text-stroke:0.3px currentColor;text-decoration:underline;text-decoration-thickness:1.1px;text-underline-offset:5.1px;text-decoration-skip-ink:none;left:19.07px;top:323.00px;color:#dcddde;transform:scaleX(1.0192);">blade-gateway-74dc975549-8bmz4</span>
<span class="t" id="t76" style="font-size:17.5px;-webkit-text-stroke:0.3px currentColor;left:578.70px;top:323.00px;color:#dcddde;transform:scaleX(1.0140);">1.86 kBs</span>
<span class="t" id="t77" style="font-size:17.5px;-webkit-text-stroke:0.3px currentColor;left:806.90px;top:323.00px;color:#dcddde;transform:scaleX(1.0140);">2.88 kBs</span>
<span class="t" id="t78" style="font-size:17.5px;-webkit-text-stroke:0.3px currentColor;left:1063.90px;top:323.00px;color:#dcddde;transform:scaleX(1.0140);">11.86 pps</span>
<span class="t" id="t79" style="font-size:17.5px;-webkit-text-stroke:0.3px currentColor;left:1342.90px;top:323.00px;color:#dcddde;transform:scaleX(1.0140);">15.67 pps</span>
<span class="t" id="t80" style="font-size:17.5px;-webkit-text-stroke:0.3px currentColor;left:1651.80px;top:323.00px;color:#dcddde;transform:scaleX(1.0140);">0 pps</span>
<span class="t" id="t81" style="font-size:17.5px;-webkit-text-stroke:0.3px currentColor;left:2021.20px;top:323.00px;color:#dcddde;transform:scaleX(1.0140);">0 pps</span>
<div class="a" style="left:0;top:398.0px;width:2398px;height:2px;background:#161719"></div>
<span class="t" id="t82" style="font-size:17.5px;-webkit-text-stroke:0.3px currentColor;text-decoration:underline;text-decoration-thickness:1.1px;text-underline-offset:5.1px;text-decoration-skip-ink:none;left:19.07px;top:367.00px;color:#dcddde;transform:scaleX(1.0181);">blade-message-6dc46477cb-bks2n</span>
<span class="t" id="t83" style="font-size:17.5px;-webkit-text-stroke:0.3px currentColor;left:578.70px;top:367.00px;color:#dcddde;transform:scaleX(1.0140);">5.57 kBs</span>
<span class="t" id="t84" style="font-size:17.5px;-webkit-text-stroke:0.3px currentColor;left:806.90px;top:367.00px;color:#dcddde;transform:scaleX(1.0140);">50.27 kBs</span>
<span class="t" id="t85" style="font-size:17.5px;-webkit-text-stroke:0.3px currentColor;left:1063.90px;top:367.00px;color:#dcddde;transform:scaleX(1.0140);">62.93 pps</span>
<span class="t" id="t86" style="font-size:17.5px;-webkit-text-stroke:0.3px currentColor;left:1342.90px;top:367.00px;color:#dcddde;transform:scaleX(1.0140);">68.66 pps</span>
<span class="t" id="t87" style="font-size:17.5px;-webkit-text-stroke:0.3px currentColor;left:1651.80px;top:367.00px;color:#dcddde;transform:scaleX(1.0140);">0 pps</span>
<span class="t" id="t88" style="font-size:17.5px;-webkit-text-stroke:0.3px currentColor;left:2021.20px;top:367.00px;color:#dcddde;transform:scaleX(1.0140);">0 pps</span>
<div class="a" style="left:557.0px;top:3.5px;width:2.2px;height:380px;background:#18181a"></div>
<div class="a" style="left:784.5px;top:3.5px;width:2.2px;height:380px;background:#18181a"></div>
<div class="a" style="left:1042.0px;top:3.5px;width:2.2px;height:380px;background:#18181a"></div>
<div class="a" style="left:1320.8px;top:3.5px;width:2.2px;height:380px;background:#18181a"></div>
<div class="a" style="left:1629.5px;top:3.5px;width:2.2px;height:380px;background:#18181a"></div>
<div class="a" style="left:1999.0px;top:3.5px;width:2.2px;height:380px;background:#18181a"></div>
</div>
<div class="a" style="left:2515px;top:798px;width:11.4px;height:123.5px;background:#414355;border:1px solid #000;box-sizing:border-box"></div>
</section>
</main>
<div class="a" style="left:2552px;top:75.6px;width:8px;height:789.4px;background:#3f4153;border-radius:4px"></div>
</body></html>
